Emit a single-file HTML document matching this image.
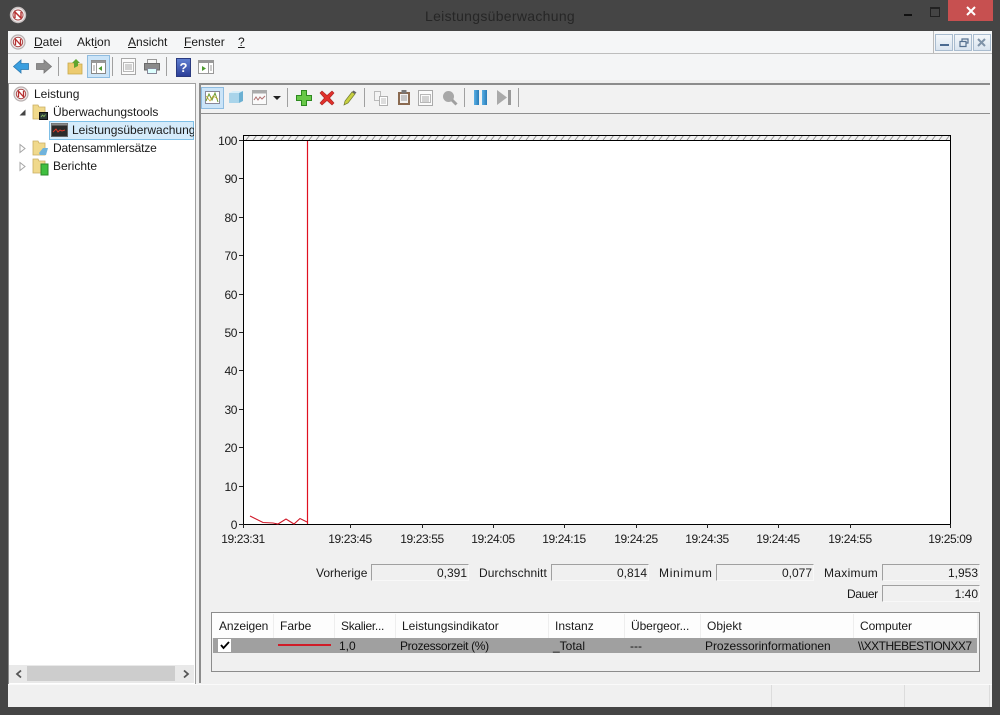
<!DOCTYPE html>
<html><head><meta charset="utf-8"><style>
html,body{margin:0;padding:0;width:1000px;height:715px;overflow:hidden;background:#454545;font-family:"Liberation Sans",sans-serif;font-size:12px;color:#1a1a1a}
.a{position:absolute}
.t{position:absolute;white-space:nowrap;line-height:14px}
.u{text-decoration:underline}
.sep{position:absolute;width:1px;background:#a0a0a0}
.yl{position:absolute;right:763px;width:30px;text-align:right;line-height:14px;letter-spacing:-.4px}
.xl{position:absolute;top:532px;width:60px;text-align:center;line-height:14px;letter-spacing:-.4px}
.box{position:absolute;height:15px;border:1px solid;border-color:#a0a0a0 #f8f8f8 #f8f8f8 #a0a0a0;background:#f0f0f0;text-align:right;line-height:16px;box-sizing:content-box;padding-right:1px}
.lb{position:absolute;top:566px;line-height:14px;white-space:nowrap}
.hs{position:absolute;top:614px;height:24px;width:1px;background:#eee}
.ht{position:absolute;top:619px;line-height:14px;white-space:nowrap}
.rt{position:absolute;top:639px;line-height:14px;white-space:nowrap;color:#111}
svg{position:absolute;overflow:visible}
.wb{position:absolute;top:34px;width:16px;height:15px;border:1px solid #a9bccf;background:linear-gradient(#f4f7fa,#d9e4ef)}
</style></head><body>

<!-- title bar -->
<div class="t" style="left:0;width:1000px;text-align:center;top:8px;font-size:14px;line-height:16px;color:#262626;letter-spacing:.3px">Leistungsüberwachung</div>
<svg style="left:9px;top:6px" width="18" height="18" viewBox="0 0 18 18"><circle cx="9" cy="9" r="7.5" fill="#f2eeee" stroke="#c8c0c0" stroke-width="1.4"/><circle cx="9" cy="9" r="5" fill="#fff" stroke="#a84848" stroke-width="1"/><path d="M6 12V6l6 6V6" fill="none" stroke="#b83030" stroke-width="1.4"/></svg>
<div class="a" style="left:904px;top:14px;width:8px;height:2px;background:#111"></div>
<div class="a" style="left:930px;top:7px;width:8px;height:7px;border:1px solid #222;border-top-width:2px"></div>
<div class="a" style="left:948px;top:0;width:45px;height:21px;background:#c75050"></div>
<svg style="left:965px;top:6px" width="12" height="10" viewBox="0 0 12 10"><path d="M2 1l8 8M10 1L2 9" stroke="#fff" stroke-width="2"/></svg>

<!-- client -->
<div class="a" style="left:8px;top:31px;width:984px;height:676px;background:#f0f0f0"></div>
<!-- menu -->
<div class="a" style="left:8px;top:31px;width:984px;height:22px;background:#f5f6f7;border-bottom:1px solid #bdbdbd"></div>
<div class="a" style="left:933px;top:31px;width:1px;height:22px;background:#b9b9b9"></div>
<svg style="left:10px;top:34px" width="16" height="16" viewBox="0 0 16 16"><circle cx="8" cy="8" r="7" fill="#efeaea" stroke="#b8b0b0" stroke-width="1.2"/><circle cx="8" cy="8" r="4.7" fill="#fff" stroke="#a84848"/><path d="M5.500 11V5.200l5 5.600V5" fill="none" stroke="#b83030" stroke-width="1.300"/></svg>
<div class="t" style="left:34px;top:35px"><span class="u">D</span>atei</div>
<div class="t" style="left:77px;top:35px">Akt<span class="u">i</span>on</div>
<div class="t" style="left:128px;top:35px"><span class="u">A</span>nsicht</div>
<div class="t" style="left:184px;top:35px"><span class="u">F</span>enster</div>
<div class="t" style="left:238px;top:35px"><span class="u">?</span></div>
<div class="wb" style="left:935px"></div><div class="wb" style="left:954px"></div><div class="wb" style="left:973px"></div>
<div class="a" style="left:940px;top:44px;width:9px;height:2px;background:#4a6a90"></div>
<svg style="left:959px;top:38px" width="10" height="10" viewBox="0 0 10 10"><path d="M3 3V1h6v4H7M1 3.500h6v5H1z" fill="none" stroke="#55708f" stroke-width="1.200"/></svg>
<svg style="left:977px;top:38px" width="10" height="10" viewBox="0 0 10 10"><path d="M1 1l7 7M8 1L1 8" stroke="#7f93a8" stroke-width="2"/></svg>

<!-- main toolbar -->
<div class="a" style="left:8px;top:54px;width:984px;height:26px;background:#f4f5f6"></div>
<svg style="left:13px;top:59px" width="16" height="15" viewBox="0 0 16 15"><path d="M0.500 7.500L8 1v3.500h7.500v6H8V14z" fill="#3a9fe0" stroke="#2a78b0" stroke-width=".8"/></svg>
<svg style="left:36px;top:59px" width="16" height="15" viewBox="0 0 16 15"><path d="M15.500 7.500L8 1v3.500H.5v6H8V14z" fill="#8d8d8d" stroke="#777" stroke-width=".8"/></svg>
<div class="sep" style="left:58px;top:57px;height:19px"></div>
<svg style="left:67px;top:57px" width="16" height="18" viewBox="0 0 16 18"><path d="M1 6h5l1 1h8v10H1z" fill="#eccb70" stroke="#c8a84a" stroke-width=".8"/><path d="M7 11V6H5l4-4 4 4h-2v3z" fill="#5fa52e"/></svg>
<div class="a" style="left:87px;top:55px;width:21px;height:21px;background:#cbe4f8;border:1px solid #8fbce0"></div>
<svg style="left:91px;top:60px" width="15" height="14" viewBox="0 0 15 14"><rect x=".5" y=".5" width="14" height="13" fill="#fff" stroke="#888"/><rect x=".5" y=".5" width="14" height="2.500" fill="#999"/><path d="M5.500 3v10M2 6h2M2 8h2M2 10h2" stroke="#999"/><path d="M11 6v5L7.500 8.500z" fill="#4d9a30"/></svg>
<div class="sep" style="left:112px;top:57px;height:19px"></div>
<svg style="left:121px;top:58px" width="15" height="17" viewBox="0 0 15 17"><rect x=".5" y=".5" width="14" height="16" fill="#fbfbfb" stroke="#a8a8a8"/><rect x="2.500" y="4.500" width="10" height="9" fill="none" stroke="#b8b8b8"/><path d="M4 7h7M4 9h7M4 11h7" stroke="#aaa"/></svg>
<svg style="left:144px;top:59px" width="16" height="15" viewBox="0 0 16 15"><rect x="3.500" y=".5" width="9" height="5" fill="#f5f5f5" stroke="#999"/><rect x=".5" y="4.500" width="15" height="6.500" fill="#8a8a8a" stroke="#6a6a6a"/><rect x="3.500" y="9.500" width="9" height="5" fill="#dff" stroke="#889"/></svg>
<div class="sep" style="left:166px;top:57px;height:19px"></div>
<div class="a" style="left:176px;top:58px;width:13px;height:17px;background:linear-gradient(#5f7fd0,#2b3f99);border:1px solid #2a3a80;color:#fff;font:bold 13px/17px 'Liberation Sans',sans-serif;text-align:center;box-sizing:content-box">?</div>
<svg style="left:198px;top:60px" width="16" height="14" viewBox="0 0 16 14"><rect x=".5" y=".5" width="15" height="13" fill="#fff" stroke="#999"/><rect x=".5" y=".5" width="15" height="2.500" fill="#999"/><path d="M10.500 3v10M12 6h2M12 8h2M12 10h2" stroke="#999"/><path d="M4 6v5l4-2.500z" fill="#4d9a30"/></svg>

<!-- tree pane -->
<div class="a" style="left:8px;top:83px;width:186px;height:600px;background:#fff;border:1px solid #a0a0a0;border-left-color:#888"></div>
<svg style="left:13px;top:86px" width="16" height="16" viewBox="0 0 16 16"><circle cx="8" cy="8" r="7" fill="#efeaea" stroke="#b8b0b0" stroke-width="1.200"/><circle cx="8" cy="8" r="4.700" fill="#fff" stroke="#a84848"/><path d="M5.500 11V5.200l5 5.600V5" fill="none" stroke="#b83030" stroke-width="1.300"/></svg>
<div class="t" style="left:34px;top:87px">Leistung</div>
<svg style="left:19px;top:109px" width="7" height="7" viewBox="0 0 7 7"><path d="M6.500 0.500V6.500H0.500z" fill="#444"/></svg>
<svg style="left:32px;top:104px" width="17" height="17" viewBox="0 0 17 17"><path d="M1 1h5l1 2h6v12H1z" fill="#f0d98c" stroke="#c9ad60" stroke-width=".8"/><rect x="7.500" y="8.500" width="8" height="7" fill="#2c3a36" stroke="#111"/><path d="M9 13l1.500-2 1.500 1.500 1.500-2" fill="none" stroke="#8dc060" stroke-width=".8"/></svg>
<div class="t" style="left:53px;top:105px">Überwachungstools</div>
<div class="a" style="left:49px;top:121px;width:143px;height:17px;background:#d5ebfa;border:1px solid #7fbfe6"></div>
<svg style="left:51px;top:123px" width="17" height="14" viewBox="0 0 17 14"><rect x=".5" y=".5" width="16" height="13" fill="#2b2b2b" stroke="#666"/><rect x=".5" y=".5" width="16" height="2" fill="#888"/><path d="M2 9l3-3 2 3 2-2 2 1 3-1" fill="none" stroke="#e03a2a"/></svg>
<div class="t" style="left:72px;top:123px;width:122px;overflow:hidden">Leistungsüberwachung</div>
<svg style="left:19px;top:144px" width="7" height="9" viewBox="0 0 7 9"><path d="M1 .500l5 4-5 4z" fill="#fff" stroke="#a6a6a6"/></svg>
<svg style="left:32px;top:140px" width="17" height="17" viewBox="0 0 17 17"><path d="M1 1h5l1 2h6v12H1z" fill="#f0d98c" stroke="#c9ad60" stroke-width=".8"/><path d="M7 13l4-5h5l-2 7H8z" fill="#6fb3dc"/></svg>
<div class="t" style="left:53px;top:141px;letter-spacing:-.18px">Datensammlersätze</div>
<svg style="left:19px;top:162px" width="7" height="9" viewBox="0 0 7 9"><path d="M1 .500l5 4-5 4z" fill="#fff" stroke="#a6a6a6"/></svg>
<svg style="left:32px;top:158px" width="17" height="17" viewBox="0 0 17 17"><path d="M1 1h5l1 2h6v12H1z" fill="#f0d98c" stroke="#c9ad60" stroke-width=".8"/><rect x="9" y="6" width="7" height="11" fill="#3fbf3f" stroke="#2a8a2a"/></svg>
<div class="t" style="left:53px;top:159px">Berichte</div>
<!-- scrollbar -->
<div class="a" style="left:9px;top:665px;width:185px;height:18px;background:#e9e9e9"></div>
<div class="a" style="left:27px;top:666px;width:148px;height:15px;background:#cdcdcd"></div>
<svg style="left:14px;top:669px" width="10" height="10" viewBox="0 0 10 10"><path d="M7 1.500L3 5l4 3.500" fill="none" stroke="#555" stroke-width="1.800"/></svg>
<svg style="left:181px;top:669px" width="10" height="10" viewBox="0 0 10 10"><path d="M3 1.500L7 5 3 8.500" fill="none" stroke="#555" stroke-width="1.800"/></svg>

<!-- right pane -->
<div class="a" style="left:199px;top:83px;width:2px;height:600px;background:#8c8c8c"></div>
<div class="a" style="left:199px;top:83px;width:791px;height:2px;background:#8c8c8c"></div>
<div class="a" style="left:201px;top:85px;width:789px;height:28px;background:#f2f2f2;border-bottom:1px solid #8f8f8f"></div>
<div class="a" style="left:201px;top:87px;width:21px;height:20px;background:#cbe4f8;border:1px solid #8fbce0"></div>
<svg style="left:205px;top:91px" width="15" height="13" viewBox="0 0 15 13"><rect x=".5" y=".5" width="14" height="12" fill="#fff" stroke="#889"/><path d="M1 10l3-7 3 6 3-7 3 9" fill="none" stroke="#6a9a30"/><path d="M1 5l4 5 3-5 5 3" fill="none" stroke="#c8a020" stroke-width=".7"/></svg>
<svg style="left:228px;top:90px" width="16" height="15" viewBox="0 0 16 15"><path d="M1 3h10v10H1z" fill="#a9d4ea"/><path d="M1 3l4-2h10l-4 2z" fill="#d8eef8"/><path d="M11 3l4-2v10l-4 2z" fill="#6cb0d2"/></svg>
<svg style="left:252px;top:90px" width="15" height="15" viewBox="0 0 15 15"><rect x=".5" y=".5" width="14" height="14" fill="#fafafa" stroke="#aaa"/><rect x=".5" y=".5" width="14" height="3" fill="#aaa"/><path d="M2 10l2-3 2 3 2-3 2 2 3-3" fill="none" stroke="#b07070"/></svg>
<svg style="left:273px;top:96px" width="8" height="4" viewBox="0 0 8 4"><path d="M0 0h8L4 4z" fill="#222"/></svg>
<div class="sep" style="left:287px;top:88px;height:19px"></div>
<svg style="left:296px;top:90px" width="16" height="16" viewBox="0 0 16 16"><path d="M5.500.500h5v5h5v5h-5v5h-5v-5h-5v-5h5z" fill="#68c848" stroke="#2e8a20"/></svg>
<svg style="left:319px;top:90px" width="16" height="16" viewBox="0 0 16 16"><path d="M1 3l2-2 5 4.500L13 1l2 2-4.500 5 4.500 5-2 2-5-4.500L3 15l-2-2 4.500-5z" fill="#e0302a" stroke="#a82020" stroke-width=".6"/></svg>
<svg style="left:343px;top:90px" width="14" height="16" viewBox="0 0 14 16"><path d="M1 15l1-4 7-9 3 2-7 9z" fill="#c8d040" stroke="#707a30" stroke-width=".7"/><path d="M9 2l1.500-1.500 3 2L12 4z" fill="#666"/></svg>
<div class="sep" style="left:364px;top:88px;height:19px"></div>
<svg style="left:374px;top:91px" width="14" height="15" viewBox="0 0 14 15"><path d="M.5.500h6v9h-6z" fill="#f4f4f4" stroke="#bbb"/><path d="M5.500 5.500h8v9h-8z" fill="#fff" stroke="#b0b0b0"/><path d="M7 8h5M7 10h5M7 12h5" stroke="#bbb"/></svg>
<svg style="left:397px;top:90px" width="14" height="15" viewBox="0 0 14 15"><rect x="1" y="2" width="12" height="13" fill="#8a6a50"/><rect x="3" y="4" width="8" height="9" fill="#f2f2f2"/><rect x="4.500" y="0" width="5" height="3.500" fill="#777"/><path d="M4 6h6M4 8h6M4 10h6" stroke="#999"/></svg>
<svg style="left:418px;top:90px" width="15" height="16" viewBox="0 0 15 16"><rect x=".5" y=".5" width="14" height="15" fill="#fbfbfb" stroke="#aaa"/><rect x="2.500" y="4.500" width="10" height="8" fill="none" stroke="#b8b8b8"/><path d="M4 7h7M4 9h7M4 11h7" stroke="#aaa"/></svg>
<svg style="left:442px;top:90px" width="16" height="16" viewBox="0 0 16 16"><circle cx="6.500" cy="6.500" r="5.500" fill="#a8a8a8"/><path d="M10 10l4.500 4.500" stroke="#a0a0a0" stroke-width="3"/></svg>
<div class="sep" style="left:464px;top:88px;height:19px"></div>
<div class="a" style="left:474px;top:90px;width:5px;height:15px;background:linear-gradient(90deg,#5ab0e4,#2a7cb8)"></div>
<div class="a" style="left:482px;top:90px;width:5px;height:15px;background:linear-gradient(90deg,#5ab0e4,#2a7cb8)"></div>
<svg style="left:497px;top:90px" width="15" height="15" viewBox="0 0 15 15"><path d="M0 0l10 7.500L0 15z" fill="#aaa"/><rect x="11" y="0" width="3" height="15" fill="#999"/></svg>
<div class="sep" style="left:518px;top:88px;height:19px"></div>

<!-- chart -->
<svg style="left:0;top:0" width="1000" height="715" viewBox="0 0 1000 715">
<defs><pattern id="h" width="7" height="5" patternUnits="userSpaceOnUse"><path d="M1 5L5 0" stroke="#888" stroke-width=".8"/></pattern></defs>
<rect x="243.500" y="135.500" width="707" height="5" fill="url(#h)" stroke="#000"/>
<rect x="243.500" y="140.500" width="707" height="384" fill="#fff" stroke="#000"/>
<path d="M250 516L263 522.500L273 523L278 524L286 519L294 524L300 518.500L307 522" fill="none" stroke="#d01828" stroke-width="1.100"/>
<path d="M307.500 141V524" fill="none" stroke="#e01020" stroke-width="1.200"/>
<path d="M239 140.500h4M239 178.500h4M239 217.500h4M239 255.500h4M239 294.500h4M239 332.500h4M239 370.500h4M239 409.500h4M239 447.500h4M239 486.500h4M239 524.500h4M243.500 524v4M350.500 524v4M422.500 524v4M493.500 524v4M564.500 524v4M636.500 524v4M707.500 524v4M778.500 524v4M850.500 524v4M950.500 524v4" stroke="#222" fill="none"/>
</svg>
<div class="yl" style="top:134px">100</div><div class="yl" style="top:172px">90</div><div class="yl" style="top:211px">80</div><div class="yl" style="top:249px">70</div><div class="yl" style="top:288px">60</div><div class="yl" style="top:326px">50</div><div class="yl" style="top:364px">40</div><div class="yl" style="top:403px">30</div><div class="yl" style="top:441px">20</div><div class="yl" style="top:480px">10</div><div class="yl" style="top:518px">0</div>
<div class="xl" style="left:213px">19:23:31</div><div class="xl" style="left:320px">19:23:45</div><div class="xl" style="left:392px">19:23:55</div><div class="xl" style="left:463px">19:24:05</div><div class="xl" style="left:534px">19:24:15</div><div class="xl" style="left:606px">19:24:25</div><div class="xl" style="left:677px">19:24:35</div><div class="xl" style="left:748px">19:24:45</div><div class="xl" style="left:820px">19:24:55</div><div class="xl" style="left:920px">19:25:09</div>

<!-- stats -->
<div class="lb" style="left:316px">Vorherige</div><div class="box" style="left:371px;top:564px;width:95px">0,391</div>
<div class="lb" style="left:479px;letter-spacing:.1px">Durchschnitt</div><div class="box" style="left:551px;top:564px;width:95px">0,814</div>
<div class="lb" style="left:659px;letter-spacing:.7px">Minimum</div><div class="box" style="left:716px;top:564px;width:95px">0,077</div>
<div class="lb" style="left:824px;letter-spacing:.3px">Maximum</div><div class="box" style="left:882px;top:564px;width:95px">1,953</div>
<div class="lb" style="left:847px;top:587px;letter-spacing:-.4px">Dauer</div><div class="box" style="left:882px;top:585px;width:95px">1:40</div>

<!-- table -->
<div class="a" style="left:211px;top:612px;width:767px;height:58px;border:1px solid #8c8c8c;background:#f0f0f0"></div>
<div class="a" style="left:212px;top:613px;width:765px;height:25px;background:#fdfdfd"></div>
<div class="a" style="left:213px;top:638px;width:764px;height:15px;background:#a0a0a0"></div>
<div class="hs" style="left:273px"></div><div class="hs" style="left:334px"></div><div class="hs" style="left:395px"></div><div class="hs" style="left:548px"></div><div class="hs" style="left:624px"></div><div class="hs" style="left:700px"></div><div class="hs" style="left:853px"></div>
<div class="ht" style="left:219px;letter-spacing:-.1px">Anzeigen</div><div class="ht" style="left:280px">Farbe</div><div class="ht" style="left:341px;letter-spacing:-.3px">Skalier...</div><div class="ht" style="left:402px">Leistungsindikator</div><div class="ht" style="left:555px">Instanz</div><div class="ht" style="left:631px;letter-spacing:-.1px">Übergeor...</div><div class="ht" style="left:707px">Objekt</div><div class="ht" style="left:860px;letter-spacing:-.1px">Computer</div>
<div class="a" style="left:218px;top:639px;width:13px;height:13px;background:#fff"></div>
<svg style="left:220px;top:641px" width="10" height="8" viewBox="0 0 10 8"><path d="M1 4l2.500 3L9 1" fill="none" stroke="#000" stroke-width="1.800"/></svg>
<div class="a" style="left:278px;top:644px;width:53px;height:2px;background:#d01c28"></div>
<div class="rt" style="left:339px">1,0</div><div class="rt" style="left:400px;letter-spacing:-.35px">Prozessorzeit (%)</div><div class="rt" style="left:553px">_Total</div><div class="rt" style="left:630px">---</div><div class="rt" style="left:705px;letter-spacing:-.05px">Prozessorinformationen</div><div class="rt" style="left:858px;letter-spacing:-.5px">\\XXTHEBESTIONXX7</div>

<!-- status -->
<div class="a" style="left:8px;top:684px;width:984px;height:1px;background:#fafafa"></div>
<div class="a" style="left:771px;top:685px;width:1px;height:22px;background:#dcdcdc"></div>
<div class="a" style="left:904px;top:685px;width:1px;height:22px;background:#dcdcdc"></div>
<div class="a" style="left:989px;top:685px;width:1px;height:22px;background:#dcdcdc"></div>
</body></html>
